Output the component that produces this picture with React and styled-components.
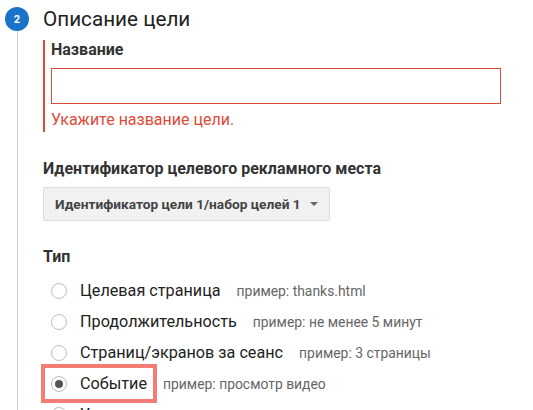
import React from "react";
import styled, { createGlobalStyle } from "styled-components";

const Global = createGlobalStyle`
  html, body { margin: 0; padding: 0; background: #fff; }
  body { font-family: Roboto, "Noto Sans", Arial, sans-serif; color: #222; overflow: hidden; }
`;

const Step = styled.div`
  display: flex;
  height: 410px;
  overflow: hidden;
`;

const Rail = styled.div`
  width: 24px;
  margin: 7px 14px 0 5px;
  display: flex;
  flex-direction: column;
  align-items: center;
  flex-shrink: 0;
`;

const Badge = styled.div`
  width: 24px;
  height: 24px;
  border-radius: 50%;
  background: #1a73c9;
  color: #fff;
  font-size: 11px;
  font-weight: 700;
  display: flex;
  align-items: center;
  justify-content: center;
`;

const Line = styled.div`
  width: 1px;
  flex: 1;
  background: #cfcfcf;
`;

const Content = styled.div`
  flex: 1;
  padding-top: 7px;
`;

const Heading = styled.h2`
  margin: 0;
  font-size: 20.7px;
  line-height: 24px;
  font-weight: 400;
  color: #212121;
`;

const ErrorGroup = styled.div`
  margin-top: 9px;
  border-left: 2px solid #dd4b39;
  padding: 0 0 2px 6px;
`;

const Label = styled.div`
  font-size: 16px;
  line-height: 20px;
  font-weight: 700;
  color: #333;
  margin-top: ${(p) => p.$top || 0}px;
`;

const Input = styled.input`
  display: block;
  box-sizing: border-box;
  width: 450px;
  height: 36px;
  margin-top: 8px;
  border: 1px solid #dd4b39;
  border-radius: 0;
  outline: none;
  padding: 0 8px;
  font: inherit;
`;

const ErrorText = styled.div`
  margin-top: 6px;
  font-size: 16px;
  line-height: 20px;
  color: #dd4b39;
`;

const Select = styled.div`
  margin-top: 8px;
  box-sizing: border-box;
  width: 287px;
  height: 34px;
  background: #f1f1f1;
  border: 1px solid #dcdcdc;
  border-radius: 2px;
  display: flex;
  align-items: center;
  padding: 0 11px;
  font-size: 13.7px;
  font-weight: 700;
  color: #444;
`;

const Caret = styled.span`
  margin-left: auto;
  width: 0;
  height: 0;
  border-left: 4px solid transparent;
  border-right: 4px solid transparent;
  border-top: 4px solid #666;
`;

const RadioList = styled.div`
  margin-top: 8px;
  padding-left: 8px;
`;

const Row = styled.div`
  height: 31px;
  display: flex;
  align-items: center;
`;

const Choice = styled.label`
  display: flex;
  align-items: center;
  height: 31px;
  margin-left: ${(p) => (p.$marked ? "-6px" : "0")};
  padding: ${(p) => (p.$marked ? "0 6px" : "0")};
  outline: ${(p) => (p.$marked ? "4px solid #f47c74" : "none")};
`;

const Radio = styled.span`
  box-sizing: border-box;
  width: 16px;
  height: 16px;
  border-radius: 50%;
  border: 1px solid #bdbdbd;
  background: #fff;
  display: flex;
  align-items: center;
  justify-content: center;
  margin-right: 13px;
  &::after {
    content: "";
    width: 8px;
    height: 8px;
    border-radius: 50%;
    background: ${(p) => (p.$checked ? "#555" : "transparent")};
  }
`;

const ChoiceText = styled.span`
  font-size: 16.2px;
  color: #222;
`;

const Hint = styled.span`
  margin-left: ${(p) => (p.$after ? "10px" : "16px")};
  font-size: 13.9px;
  color: #666;
`;

const options = [
  { label: "Целевая страница", hint: "пример: thanks.html" },
  { label: "Продолжительность", hint: "пример: не менее 5 минут" },
  { label: "Страниц/экранов за сеанс", hint: "пример: 3 страницы" },
  { label: "Событие", hint: "пример: просмотр видео", checked: true },
  { label: "Умные цели", hint: "" },
];

export default function App() {
  return (
    <>
      <Global />
      <Step>
        <Rail>
          <Badge>2</Badge>
          <Line />
        </Rail>
        <Content>
          <Heading>Описание цели</Heading>
          <ErrorGroup>
            <Label>Название</Label>
            <Input />
            <ErrorText>Укажите название цели.</ErrorText>
          </ErrorGroup>
          <Label $top={27}>Идентификатор целевого рекламного места</Label>
          <Select>
            Идентификатор цели 1/набор целей 1
            <Caret />
          </Select>
          <Label $top={26}>Тип</Label>
          <RadioList>
            {options.map((o) => (
              <Row key={o.label}>
                <Choice $marked={o.checked}>
                  <Radio $checked={o.checked} />
                  <ChoiceText>{o.label}</ChoiceText>
                </Choice>
                {o.hint && <Hint $after={o.checked}>{o.hint}</Hint>}
              </Row>
            ))}
          </RadioList>
        </Content>
      </Step>
    </>
  );
}
